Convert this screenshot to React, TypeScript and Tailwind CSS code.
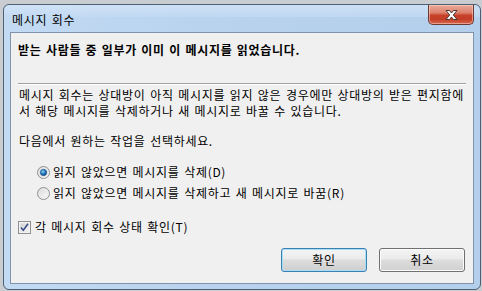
import React from "react";

function Radio({ checked }: { checked?: boolean }) {
  return (
    <svg width="13" height="13" viewBox="0 0 13 13" className="shrink-0">
      <defs>
        <linearGradient id={checked ? "rg1" : "rg0"} x1="0" y1="0" x2="1" y2="1">
          <stop offset="0" stopColor="#d6d6d6" />
          <stop offset="1" stopColor="#ffffff" />
        </linearGradient>
        <radialGradient id="dot" cx="0.4" cy="0.35" r="0.7">
          <stop offset="0" stopColor="#8fd0f5" />
          <stop offset="0.5" stopColor="#2a7fc4" />
          <stop offset="1" stopColor="#0e3f75" />
        </radialGradient>
      </defs>
      <circle cx="6.5" cy="6.5" r="6" fill={`url(#${checked ? "rg1" : "rg0"})`} stroke="#8e8f8f" strokeWidth="1" />
      <circle cx="6.5" cy="6.5" r="4.5" fill="none" stroke="#e9e9e9" strokeWidth="1" />
      {checked && <circle cx="6.5" cy="6.5" r="3.2" fill="url(#dot)" stroke="#1b4f86" strokeWidth="0.6" />}
    </svg>
  );
}

function Checkbox() {
  return (
    <svg width="13" height="13" viewBox="0 0 13 13" className="shrink-0">
      <defs>
        <linearGradient id="cbg" x1="0" y1="0" x2="1" y2="1">
          <stop offset="0" stopColor="#cfcfcf" />
          <stop offset="1" stopColor="#f8f8f8" />
        </linearGradient>
      </defs>
      <rect x="0.5" y="0.5" width="12" height="12" fill="#f4f4f4" stroke="#8e8f8f" />
      <rect x="2.5" y="2.5" width="8" height="8" fill="url(#cbg)" stroke="#e0e0e0" strokeWidth="0.5" />
      <path d="M3 6.5 L5.3 9.3 L10 2.8" fill="none" stroke="#3c4f8c" strokeWidth="1.6" strokeLinejoin="round" />
    </svg>
  );
}

function Btn({ label, def }: { label: string; def?: boolean }) {
  return (
    <div
      className={
        "w-[86px] h-[24px] rounded-[3px] border flex items-center justify-center text-[12px] text-black bg-[linear-gradient(#f4f4f4_0%,#ebebeb_45%,#dddddd_50%,#cfcfcf_100%)] " +
        (def
          ? "border-[#3c7fb1] shadow-[inset_0_0_0_1px_#a6def8]"
          : "border-[#707070] shadow-[inset_0_0_0_1px_#fcfcfc]")
      }
    >
      {label}
    </div>
  );
}

export default function App() {
  return (
    <div className="w-[482px] h-[291px] bg-[#c9ccd1] overflow-hidden font-['Noto_Sans_CJK_KR','Noto_Sans',sans-serif] tracking-[0.7px] [word-spacing:1.2px]">
      <div className="ml-[3px] mt-[4px] w-[478px] h-[286px] rounded-[6px] border border-[#4e5f76] bg-[linear-gradient(90deg,#c3daf3_0%,#b9d3ee_40%,#b4cfec_100%)] flex flex-col">
        {/* title bar */}
        <div className="h-[27px] flex items-start relative shrink-0">
          <div className="absolute inset-x-0 top-0 h-[12px] rounded-t-[6px] bg-[linear-gradient(#d6e7f8,#c3daf3)] opacity-70" />
          <div className="relative pl-[8px] pt-[7px] text-[12px] leading-[16px] text-black">메시지 회수</div>
          <div className="ml-auto mr-[6px] w-[46px] h-[20px] relative rounded-b-[5px] border border-t-0 border-[#6d3a33] bg-[linear-gradient(#e9a998_0%,#dc836e_40%,#c7412a_55%,#c43d26_75%,#d86a50_100%)] flex items-center justify-center shadow-[inset_0_0_0_1px_rgba(255,220,210,0.5)]">
            <svg width="15" height="12" viewBox="0 0 15 12">
              <path d="M2 1.5 L5.5 1.5 L7.5 4 L9.5 1.5 L13 1.5 L9.3 6 L13 10.5 L9.5 10.5 L7.5 8 L5.5 10.5 L2 10.5 L5.7 6 Z" fill="#ffffff" stroke="#4b3a38" strokeWidth="1" strokeLinejoin="round" />
            </svg>
          </div>
        </div>
        {/* client */}
        <div className="mx-[6px] w-[464px] h-[252px] border border-[#8094ad] bg-[#f0f0f0] shrink-0 flex flex-col text-[12px] leading-[16px] text-black">
          <div className="pt-[9px] pl-[7px] font-bold [word-spacing:1px]">받는 사람들 중 일부가 이미 이 메시지를 읽었습니다.</div>
          <div className="mt-[25px] mx-[7px] h-[2px] border-t border-[#a0a0a0] border-b border-b-white" />
          <div className="mt-[2px] pl-[8px] whitespace-nowrap">
            <div>메시지 회수는 상대방이 아직 메시지를 읽지 않은 경우에만 상대방의 받은 편지함에</div>
            <div>서 해당 메시지를 삭제하거나 새 메시지로 바꿀 수 있습니다.</div>
          </div>
          <div className="mt-[14px] pl-[8px]">다음에서 원하는 작업을 선택하세요.</div>
          <div className="mt-[15px] pl-[26px] flex items-center gap-[3px] h-[16px]">
            <Radio checked />
            <span>읽지 않았으면 메시지를 삭제(D)</span>
          </div>
          <div className="mt-[5px] pl-[26px] flex items-center gap-[3px] h-[16px]">
            <Radio />
            <span>읽지 않았으면 메시지를 삭제하고 새 메시지로 바꿈(R)</span>
          </div>
          <div className="mt-[18px] pl-[7px] flex items-center gap-[4px] h-[16px]">
            <Checkbox />
            <span>각 메시지 회수 상태 확인(T)</span>
          </div>
          <div className="mt-[13px] pr-[8px] flex justify-end gap-[12px]">
            <Btn label="확인" def />
            <Btn label="취소" />
          </div>
        </div>
      </div>
    </div>
  );
}
